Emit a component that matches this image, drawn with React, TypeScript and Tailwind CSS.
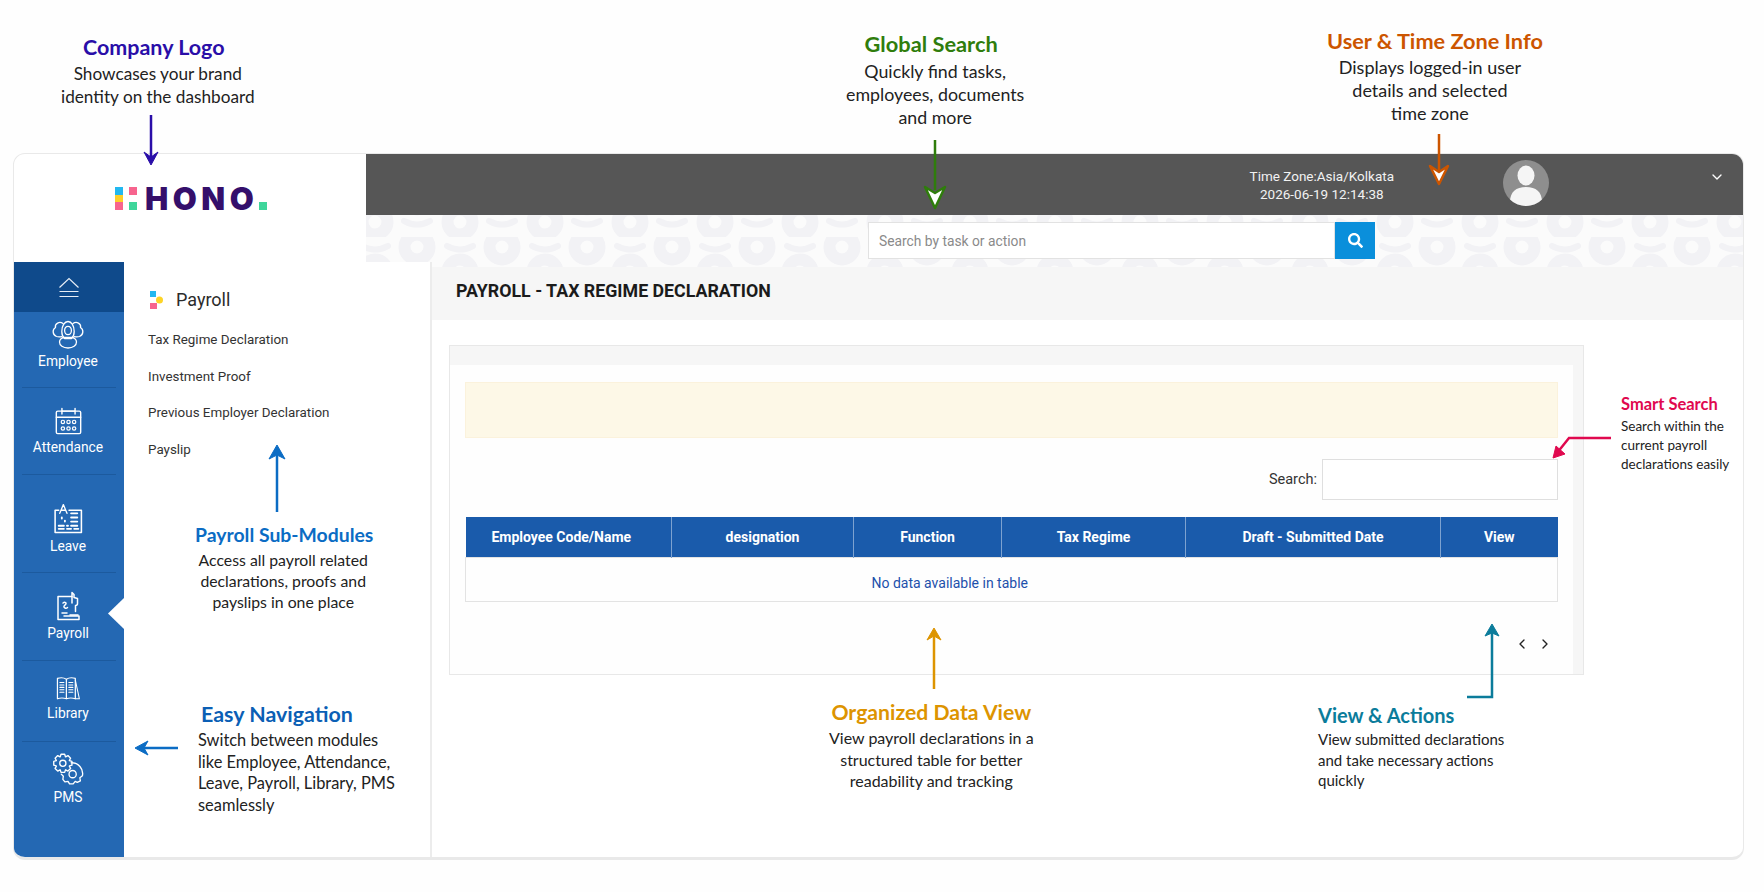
import { ChevronDown, ChevronLeft, ChevronRight } from 'lucide-react';
import { FaSearch } from 'react-icons/fa';
import type { ReactNode } from 'react';

const noteFont = "font-['Lato','Noto_Sans',sans-serif]";

function gearPath(cx: number, cy: number, r: number, teeth: number) {
  const pts: string[] = [];
  const step = (Math.PI * 2) / teeth;
  for (let i = 0; i < teeth; i++) {
    const a = i * step;
    [[-0.3, 0.76], [-0.16, 1], [0.16, 1], [0.3, 0.76]].forEach(([o, k]) => {
      pts.push(`${(cx + Math.cos(a + o * step * 1.6) * r * k).toFixed(2)} ${(cy + Math.sin(a + o * step * 1.6) * r * k).toFixed(2)}`);
    });
  }
  return `M${pts.join('L')}Z`;
}

function IconBase({ children, className }: { children: ReactNode; className: string }) {
  return (
    <svg viewBox="0 0 32 32" fill="none" stroke="currentColor" strokeWidth="1.3" strokeLinecap="round" strokeLinejoin="round" className={className}>
      {children}
    </svg>
  );
}

function EmployeeIcon() {
  return (
    <IconBase className="h-[32px] w-[34px]">
      <ellipse cx="16" cy="12.5" rx="3.4" ry="4.2" />
      <path d="M9.8 13.5C9.8 8 12.5 3.5 16 3.5s6.2 4.5 6.2 10c0 3-1 5.5-2.7 7h-7c-1.7-1.500-2.700-4-2.700-7z" />
      <path d="M11 5.500C7.500 3 2.500 5.500 3.500 9.500c-3.500 2-3 7.500 1 9 1.500.5 3 .6 5 .2" />
      <path d="M21 5.500c3.500-2.500 8.500 0 7.500 4 3.500 2 3 7.500-1 9-1.500.5-3 .6-5 .2" />
      <path d="M7.500 24c0-2.500 2.500-4.500 5-4.500h7c2.500 0 5 2 5 4.500 0 3.500-3.500 6-8.500 6s-8.500-2.500-8.500-6z" />
    </IconBase>
  );
}

function AttendanceIcon() {
  return (
    <IconBase className="h-[30px] w-[33px]">
      <rect x="3" y="5.500" width="26" height="24" rx="1.500" strokeWidth="1.500" />
      <path d="M3 12h26M9 2.500v6M23 2.500v6M9 5.500h14" strokeWidth="1.500" />
      {[10, 16, 22].map((x) => (
        <g key={x}>
          <circle cx={x} cy="17" r="1.800" />
          <circle cx={x} cy="24" r="1.800" />
        </g>
      ))}
    </IconBase>
  );
}

function LeaveIcon() {
  return (
    <IconBase className="h-[33px] w-[34px]">
      <path d="M7 8H3.500v21.500h25.500V8H17" strokeWidth="1.500" />
      <path d="M8 11 11.500 2.500 15 11M9.500 8h4" strokeWidth="1.300" />
      <path d="M19 11h6M19 15h6M19 19h6M19 23h6M7 23h5M7 26h5M15 26h4M22 26h4M10 15v1M13 18v1M15 23h1" strokeWidth="1.800" />
    </IconBase>
  );
}

function PayrollIcon() {
  return (
    <IconBase className="h-[32px] w-[34px]">
      <path d="M20 6.500H6v23h21V26H12" strokeWidth="1.500" />
      <path d="M20 13v-10.500l2 2v3l3.500 1v5c0 1-1 2-2 2v6" strokeWidth="1.500" />
      <path d="M11 13c2-1.500 4 0 2.500 1.500S11 17 13 18c1 .5 2 0 2.500-.5M10 23h5M18 25h8" strokeWidth="1.500" />
    </IconBase>
  );
}

function LibraryIcon() {
  return (
    <IconBase className="h-[26px] w-[34px]">
      <path d="M3 3c3-1 8-1 11 1v24c-3-1-8-1-11 0zM14 4c3-2 8-2 11-1v25c-3-1-8-1-11 0" strokeWidth="1.500" />
      <path d="M25 5l5 23h-5" strokeWidth="1.300" />
      <path d="M6 8h5M6 11h5M6 14h5M6 17h5M6 20h5M17 8h5M17 11h5M17 14h5M17 17h5M17 20h5" strokeWidth="1.300" />
    </IconBase>
  );
}

function PmsIcon() {
  return (
    <IconBase className="h-[33px] w-[34px]">
      <path d={gearPath(11, 10, 9, 8)} />
      <circle cx="11" cy="10" r="3" />
      <path d="M19 9.500a10.500 10.500 0 0 1 11 12.500l-2.500 2 .5 3-3 1.500-2-1-2 2.500h-3.500l-1.500-2.500-3 .5-2-2.500.5-3-2-2" />
      <circle cx="20.500" cy="20.500" r="3.500" />
    </IconBase>
  );
}

const modules = [
  { label: 'Employee', icon: <EmployeeIcon />, itemClass: 'h-[76px] pt-[6px]', active: false },
  { label: 'Attendance', icon: <AttendanceIcon />, itemClass: 'h-[87px] pt-[18px]', active: false },
  { label: 'Leave', icon: <LeaveIcon />, itemClass: 'h-[98px] pt-[27px]', active: false },
  { label: 'Payroll', icon: <PayrollIcon />, itemClass: 'h-[88px] pt-[17px]', active: true },
  { label: 'Library', icon: <LibraryIcon />, itemClass: 'h-[81px] pt-[15px]', active: false },
  { label: 'PMS', icon: <PmsIcon />, itemClass: 'pt-[11px] border-b-0', active: false },
];

const columns = [
  { title: 'Employee Code/Name', w: 'w-[206px] pr-[14px]' },
  { title: 'designation', w: 'w-[182px]' },
  { title: 'Function', w: 'w-[148px]' },
  { title: 'Tax Regime', w: 'w-[184px]' },
  { title: 'Draft - Submitted Date', w: 'w-[255px]' },
  { title: 'View', w: 'w-[117px]' },
];

function Sidebar() {
  return (
    <div className="flex w-[110px] shrink-0 flex-col bg-[#2468b3] font-['Roboto',sans-serif]">
      <div className="flex h-[50px] shrink-0 items-center justify-center bg-[#0f4a8b] pt-[1px]">
        <svg width="22" height="21" viewBox="0 0 22 21" fill="none" stroke="#e8eef6" strokeWidth="1.200">
          <path d="M1.500 10.500 11 1.500l9.500 9M1.500 14.500h19M1.500 19.500h19" />
        </svg>
      </div>
      {modules.map((m) => (
        <div key={m.label} className={`relative shrink-0 ${m.label === 'PMS' ? 'flex-1' : ''}`}>
          <div className={`mx-[8px] flex flex-col items-center border-b border-[#1c5a9e] pr-[2px] text-white ${m.itemClass}`}>
            {m.icon}
            <span className="mt-[3px] text-[13.800px] leading-[16px]">{m.label}</span>
          </div>
          {m.active && <div className="absolute right-0 top-[25px] h-[31px] w-[16px] bg-white [clip-path:polygon(100%_0,0_50%,100%_100%)]" />}
        </div>
      ))}
    </div>
  );
}

function SubMenu() {
  const items = ['Tax Regime Declaration', 'Investment Proof', 'Previous Employer Declaration', 'Payslip'];
  return (
    <div className="relative w-[308px] shrink-0 border-r-2 border-[#ececec] bg-white pl-[24px] pt-[25px] font-['Roboto',sans-serif]">
      <div className="flex items-center gap-[11px]">
        <svg width="15" height="18" viewBox="0 0 15 18" className="ml-[2px]">
          <rect x="0" y="0" width="6" height="6" fill="#22b8f0" />
          <circle cx="9.500" cy="9" r="3.500" fill="#fdd426" />
          <rect x="0" y="12" width="7" height="6" fill="#f7648e" />
        </svg>
        <span className="text-[18px] leading-[26px] text-[#2b2b2b]">Payroll</span>
      </div>
      <ul className="mt-[18px] flex flex-col gap-[19.700px]">
        {items.map((item) => (
          <li key={item} className="text-[13.400px] leading-[17px] text-[#333]">{item}</li>
        ))}
      </ul>
    </div>
  );
}

function DeclarationPanel() {
  return (
    <div className="ml-[17px] mt-[25px] flex h-[330px] w-[1135px] border border-[#e8e8e8] bg-[#f6f6f6] pr-[12px] pt-[19px] font-['Roboto',sans-serif]">
      <div className="flex-1 bg-[#fefefe] px-[15px] pt-[17px]">
        <div className="h-[56px] border border-[#fbf2dc] bg-[#fdf8e7]" />
        <div className="mt-[21px] flex items-center justify-end gap-[5px]">
          <label className="text-[14.500px] text-[#333]">Search:</label>
          <input className="h-[41px] w-[236px] border border-[#dfdfdf] bg-white" />
        </div>
        <table className="mt-[17px] w-[1092px] table-fixed border-collapse">
          <thead>
            <tr className="h-[40px] bg-[#1a5bab] text-[14px] text-white">
              {columns.map((c) => (
                <th key={c.title} className={`${c.w} border-r border-[#7da2d0] pt-[1px] font-bold last:border-r-0`}>{c.title}</th>
              ))}
            </tr>
          </thead>
          <tbody>
            <tr className="h-[44px] border border-[#e3e3e3]">
              <td colSpan={5} className="pr-[7px] pt-[8px] text-center text-[14px] text-[#1d50ab]">No data available in table</td>
              <td />
            </tr>
          </tbody>
        </table>
        <div className="mt-[34px] flex justify-end gap-[7px] pr-[5px] text-[#222]">
          <ChevronLeft size={16} strokeWidth={2} />
          <ChevronRight size={16} strokeWidth={2} />
        </div>
      </div>
    </div>
  );
}

function DonutPattern() {
  return (
    <svg className="absolute inset-0 h-full w-full" aria-hidden="true">
      <defs>
        <pattern id="donuts" x="5" y="-28" width="85" height="50" patternUnits="userSpaceOnUse">
          <circle cx="4" cy="35" r="12.500" fill="none" stroke="#f2f2f5" strokeWidth="12" />
          <circle cx="46" cy="10" r="12.500" fill="none" stroke="#f2f2f5" strokeWidth="12" />
          <path d="M33 34q13 7 26 0" fill="none" stroke="#f2f2f5" strokeWidth="6" strokeLinecap="round" />
          <path d="M-9 9q13 7 26 0M76 9q13 7 26 0" fill="none" stroke="#f2f2f5" strokeWidth="6" strokeLinecap="round" />
          <circle cx="89" cy="35" r="12.500" fill="none" stroke="#f2f2f5" strokeWidth="12" />
        </pattern>
      </defs>
      <rect width="100%" height="100%" fill="#fbfbfb" />
      <rect width="100%" height="100%" fill="url(#donuts)" />
    </svg>
  );
}

function Dashboard() {
  return (
    <div className="ml-[13px] mt-[153px] flex h-[707px] w-[1731px] flex-col overflow-hidden rounded-[12px] border border-b-[3px] border-[#e9e9e9] bg-white">
      <div className="flex h-[113px] shrink-0">
        <div className="flex w-[352px] shrink-0 items-start pl-[101px] pt-[33px]">
          <svg width="23" height="23" viewBox="0 0 23 23" className="mr-[7px]">
            <rect x="0" y="0" width="8" height="8" fill="#22b8f0" />
            <rect x="0" y="8" width="8" height="7" fill="#fdd02a" />
            <rect x="0" y="15" width="8" height="8" fill="#f7648e" />
            <rect x="14" y="0" width="8" height="8" fill="#f7648e" />
            <rect x="14" y="15" width="8" height="8" fill="#3fd69b" />
          </svg>
          <span className="font-['Inter',sans-serif] text-[31px] font-black leading-[23px] tracking-[4.500px] text-[#350f6b]">HONO</span>
          <span className="ml-[1px] mt-[15px] h-[8px] w-[8px] bg-[#3fd69b]" />
        </div>
        <div className="flex flex-1 flex-col">
          <div className="flex h-[61px] shrink-0 items-center justify-end bg-[#565656] pr-[18px] text-white">
            <div className="mr-[109px] text-center font-['Roboto',sans-serif] text-[13.500px] leading-[18px] text-[#f2f2f2]">
              <div>Time Zone:Asia/Kolkata</div>
              <div>2026-06-19 12:14:38</div>
            </div>
            <div className="mb-[3px] mr-[160px] flex h-[46px] w-[46px] items-center justify-center overflow-hidden rounded-full bg-[#8e8e8e]">
              <svg width="46" height="46" viewBox="0 0 46 46" fill="#f5f5f5">
                <ellipse cx="23" cy="15.500" rx="8.500" ry="10" />
                <path d="M7 42c0-10 6-15 16-15s16 5 16 15c-4 3-9 4-16 4S11 45 7 42z" />
              </svg>
            </div>
            <ChevronDown size={16} strokeWidth={2} className="mb-[16px]" />
          </div>
          <div className="relative h-[52px]">
            <DonutPattern />
            <div className="relative top-[7px] ml-[502px] flex h-[37px] w-[507px]">
              <input
                placeholder="Search by task or action"
                className="h-full flex-1 border border-[#e2e2e2] bg-white px-[10px] font-['Roboto',sans-serif] text-[13.800px] placeholder:text-[#8a8a8a]"
              />
              <button className="flex w-[40px] items-center justify-center bg-[#0a8fdb] text-white">
                <FaSearch size={15} />
              </button>
            </div>
          </div>
        </div>
      </div>
      <div className="relative -mt-[5px] flex flex-1">
        <Sidebar />
        <SubMenu />
        <div className="mt-[5px] flex-1">
          <div className="flex h-[53px] items-center bg-[#f6f6f6] pb-[5px] pl-[24px] font-['Roboto',sans-serif] text-[17.800px] font-bold text-[#1b1b1b]">
            PAYROLL - TAX REGIME DECLARATION
          </div>
          <DeclarationPanel />
        </div>
      </div>
    </div>
  );
}

function Note({ pos, title, titleClass, lines, align = 'text-center', bodyClass = 'text-[17px] leading-[23px]' }: {
  pos: string;
  title: string;
  titleClass: string;
  lines: string[];
  align?: string;
  bodyClass?: string;
}) {
  return (
    <div className={`absolute ${pos} ${align} ${noteFont} whitespace-nowrap`}>
      <div className={`font-bold ${titleClass}`}>{title}</div>
      <div className={`text-[#222] ${bodyClass}`}>
        {lines.map((l) => <div key={l}>{l}</div>)}
      </div>
    </div>
  );
}

function Arrows() {
  return (
    <svg className="pointer-events-none absolute inset-0" width="1764" height="892" viewBox="0 0 1764 892" fill="none">
      <path d="M151 115v47" stroke="#2a0ea8" strokeWidth="2.500" />
      <path d="M144 152l7 13 7-13-7 5z" fill="#2a0ea8" stroke="#2a0ea8" />
      <path d="M935 140v50" stroke="#2f7d0c" strokeWidth="2.500" />
      <path d="M925 187l10 21 10-21-10 6z" fill="#fff" stroke="#2f7d0c" strokeWidth="2.500" strokeLinejoin="round" />
      <path d="M1439 134v36" stroke="#cc5500" strokeWidth="2.500" />
      <path d="M1430 166l9 18 9-18-9 6z" fill="#fff" stroke="#cc5500" strokeWidth="2.500" strokeLinejoin="round" />
      <path d="M277 512v-60" stroke="#0b6cc4" strokeWidth="2.500" />
      <path d="M269 459l8-14 8 14-8-4z" fill="#0b6cc4" stroke="#0b6cc4" />
      <path d="M178 748h-38" stroke="#0b6cc4" strokeWidth="2.500" />
      <path d="M148 741l-13 7 13 7-4-7z" fill="#0b6cc4" stroke="#0b6cc4" />
      <path d="M934 689v-56" stroke="#dd9400" strokeWidth="2.500" />
      <path d="M927 640l7-12 7 12-7-4z" fill="#dd9400" stroke="#dd9400" />
      <path d="M1467 697h25v-68" stroke="#0b7c9b" strokeWidth="2.500" />
      <path d="M1485 636l7-12 7 12-7-3z" fill="#0b7c9b" stroke="#0b7c9b" />
      <path d="M1611 438h-42l-12 15" stroke="#e0094f" strokeWidth="2.500" />
      <path d="M1553 458l3-12 9 8z" fill="#e0094f" stroke="#e0094f" />
    </svg>
  );
}

export default function App() {
  return (
    <div className="relative h-[892px] w-[1764px] overflow-hidden bg-[#fefefe]">
      <Dashboard />
      <Arrows />
      <Note
        pos="left-[61px] top-[33px]"
        title="Company Logo"
        titleClass="text-[21.500px] leading-[29px] text-[#2a0ea8] pr-[8px]"
        lines={['Showcases your brand', 'identity on the dashboard']}
        bodyClass="text-[17.200px] leading-[23px]"
      />
      <Note
        pos="left-[846px] top-[28px]"
        title="Global Search"
        titleClass="text-[21.800px] leading-[32px] text-[#2f7d0c] pr-[8px]"
        lines={['Quickly find tasks,', 'employees, documents', 'and more']}
        bodyClass="text-[17.800px] leading-[23px]"
      />
      <Note
        pos="left-[1317px] top-[26px]"
        title="User & Time Zone Info"
        titleClass="text-[21.700px] leading-[30px] text-[#cc5500] pl-[10px]"
        lines={['Displays logged-in user', 'details and selected', 'time zone']}
        bodyClass="text-[18px] leading-[23px]"
      />
      <Note
        pos="left-[193px] top-[521px]"
        title="Payroll Sub-Modules"
        titleClass="text-[19.400px] leading-[27.500px] text-[#0b6cc4] pl-[2px]"
        lines={['Access all payroll related', 'declarations, proofs and', 'payslips in one place']}
        bodyClass="text-[15.800px] leading-[21px]"
      />
      <Note
        pos="left-[198px] top-[700px]"
        title="Easy Navigation"
        titleClass="text-[21.400px] leading-[29px] text-[#0b5fb5] pl-[3px]"
        lines={['Switch between modules', 'like Employee, Attendance,', 'Leave, Payroll, Library, PMS', 'seamlessly']}
        align="text-left"
        bodyClass="text-[16.400px] leading-[21.700px]"
      />
      <Note
        pos="left-[829px] top-[698px]"
        title="Organized Data View"
        titleClass="text-[21.200px] leading-[29px] text-[#dd9400]"
        lines={['View payroll declarations in a', 'structured table for better', 'readability and tracking']}
        bodyClass="text-[16px] leading-[21.500px]"
      />
      <Note
        pos="left-[1318px] top-[701px]"
        title="View & Actions"
        titleClass="text-[20px] leading-[28px] text-[#0b7c9b]"
        lines={['View submitted declarations', 'and take necessary actions', 'quickly']}
        align="text-left"
        bodyClass="text-[15px] leading-[20.500px]"
      />
      <Note
        pos="left-[1621px] top-[392px]"
        title="Smart Search"
        titleClass="text-[16.500px] leading-[25px] text-[#e0094f]"
        lines={['Search within the', 'current payroll', 'declarations easily']}
        align="text-left"
        bodyClass="text-[13.500px] leading-[19px]"
      />
    </div>
  );
}
